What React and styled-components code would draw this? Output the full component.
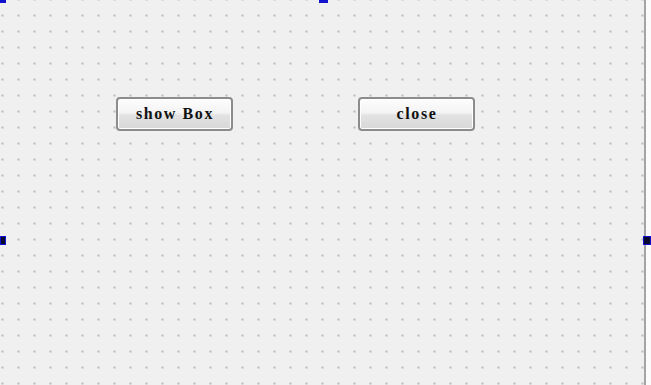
import React from "react";
import styled, { createGlobalStyle } from "styled-components";

const Global = createGlobalStyle`
  html, body { margin: 0; padding: 0; background: #ffffff; }
  body { width: 651px; height: 385px; overflow: hidden; font-family: "Liberation Serif", serif; }
`;

const Stage = styled.div`
  position: relative;
  width: 651px;
  height: 385px;
  display: flex;
  background: #fbfbfb;
`;

const Form = styled.div`
  width: 646px;
  height: 385px;
  box-sizing: border-box;
  border-right: 2px solid #a4a4a4;
  background-color: #f0f0f0;
  background-image: radial-gradient(circle, rgba(150,150,150,0.8) 0.5px, rgba(170,170,170,0.3) 1.1px, transparent 1.6px);
  background-size: 16px 16px;
  background-position: -5.5px 7.5px;
  display: flex;
  align-items: flex-start;
  gap: 125px;
  padding: 97px 0 0 116px;
`;

const Button = styled.button`
  width: 117px;
  height: 34px;
  box-sizing: border-box;
  border: 2px solid #8c8c8c;
  border-radius: 4px;
  background: linear-gradient(#fdfdfd 0%, #f4f4f4 45%, #e2e2e2 55%, #d8d8d8 100%);
  font-family: "Liberation Serif", "DejaVu Serif", serif;
  font-weight: bold;
  font-size: 16px;
  letter-spacing: 1.6px;
  color: #111;
  padding: 0 0 0 1px;
  display: flex;
  align-items: center;
  justify-content: center;
  box-shadow: inset 0 0 0 1px #ffffff;
`;

const Handle = styled.div`
  position: absolute;
  box-sizing: border-box;
  background: ${p => p.$fill};
  border: 1px solid #1010d0;
  left: ${p => p.$x}px;
  top: ${p => p.$y}px;
  width: ${p => p.$w}px;
  height: ${p => p.$h}px;
`;

export default function App() {
  return (
    <>
      <Global />
      <Stage>
        <Form>
          <Button>show Box</Button>
          <Button>close</Button>
        </Form>
        <Handle $x={0} $y={0} $w={6} $h={3} $fill="#1818c8" />
        <Handle $x={319} $y={0} $w={9} $h={3} $fill="#1818c8" />
        <Handle $x={0} $y={236} $w={6} $h={9} $fill="#0a0a30" />
        <Handle $x={643} $y={236} $w={8} $h={9} $fill="#0a0a30" />
      </Stage>
    </>
  );
}
